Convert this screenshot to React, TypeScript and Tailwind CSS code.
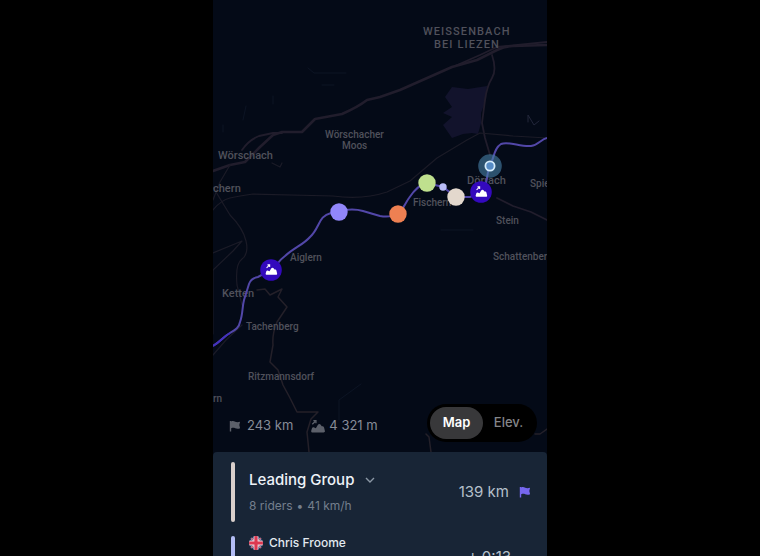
import { useState } from "react";

function FlagIcon({ className }: { className: string }) {
  return (
    <svg viewBox="0 0 12 12" className={className} fill="currentColor" aria-hidden="true">
      <path d="M.8 1h1.4v.5C3.8.8 5 1.2 6.2 1.7s2.6.7 4.900 0L10.300 5l.8 3.200c-2.200.8-3.600.5-4.900 0s-2.500-.7-4 0V11.500H.8z" />
    </svg>
  );
}

function ClimbShape() {
  return (
    <>
      <path d="M1.500 12.500C.6 12.500 0 11.900.2 11L.9 8.700c.3-1 1.300-1.200 2.100-.7l1.500.7L6.300 5.500c.6-1.100 2-1.200 2.700-.2l1 1.500c1.200-.3 2 .3 2.200 1.300l.7 3c.2.900-.3 1.400-1.200 1.400z" />
      <path d="M1.200 4.800 3.800 2.300M2.200 1.500h2.400v2.400" fill="none" stroke="currentColor" strokeWidth="1.2" />
    </>
  );
}

function ClimbIcon({ className }: { className: string }) {
  return (
    <svg viewBox="0 0 13 13" className={className} fill="currentColor" aria-hidden="true">
      <ClimbShape />
    </svg>
  );
}

function ClimbPin({ x, y }: { x: number; y: number }) {
  return (
    <g transform={`translate(${x} ${y})`} className="text-white">
      <circle r="10.8" fill="#3309bd" />
      <g transform="translate(-5.5 -6.5) scale(0.9)" fill="currentColor">
        <ClimbShape />
      </g>
    </g>
  );
}

const region = "text-[11px] font-medium tracking-widest";
const town = "text-[11px] font-medium";
const village = "text-[10px] font-medium";

const places = [
  { name: "WEISSENBACH", x: 210, y: 35, style: region },
  { name: "BEI LIEZEN", x: 221, y: 48, style: region },
  { name: "Wörschacher", x: 112, y: 138, style: village },
  { name: "Moos", x: 129, y: 149, style: village },
  { name: "Wörschach", x: 5, y: 159, style: town },
  { name: "chern", x: 0, y: 192, style: town },
  { name: "Aiglern", x: 77, y: 261, style: village },
  { name: "Ketten", x: 9, y: 297, style: town },
  { name: "Tachenberg", x: 33, y: 330, style: village },
  { name: "Ritzmannsdorf", x: 35, y: 380, style: village },
  { name: "rn", x: 0, y: 402, style: village },
  { name: "Dörrach", x: 254, y: 184, style: town },
  { name: "Fischern", x: 200, y: 206, style: village },
  { name: "Spie", x: 317, y: 187, style: village },
  { name: "Stein", x: 283, y: 224, style: village },
  { name: "Schattenber", x: 280, y: 260, style: village },
];

function RaceMap() {
  return (
    <svg
      viewBox="0 0 334 452"
      preserveAspectRatio="xMidYMax slice"
      className="block h-full w-full"
      role="img"
      aria-label="Race map"
    >
      <path
        d="M239 87 255 89 274 86 273 100 268 113 268 123 265 134 259 133 250 134 239 138 230 125 239 117 230 113 239 107 232 97z"
        fill="#12132c"
      />
      <g fill="none" stroke="#211d2c" strokeLinejoin="round" strokeLinecap="round">
        <g strokeWidth="2.6">
          <path d="M0 171 17 165 32 162 47 147 60 135 69 132H89L102 119 129 114Q145 107 154 100L167 97 187 90 239 67 264 60 284 50Q292 46 300 46L334 45" />
        </g>
        <g strokeWidth="1.8">
          <path d="M29 150Q36 140 46 136L60 133H69" />
          <path d="M242 66 267 55 284 47 334 42" />
          <path d="M279 55Q284 70 279 78T272 100L269 123 272 138 277 155M284 198 300 206 318 212 334 220" />
        </g>
        <g strokeWidth="1.2" stroke="#1b1b27">
          <path d="M0 210Q8 200 17 198T40 194L120 196Q150 200 174 192L197 181 224 158 254 140 267 133 300 136 334 138" />
          <path d="M0 187 17 215Q30 228 33 241T29 259 24 285L29 305M29 325 13 340 0 355" />
          <path d="M17 165 7 182 0 200" />
          <path d="M0 253 29 241 20 251 0 270" />
          <path d="M0 270V334" strokeWidth="1" />
          <path d="M59 163 67 167 69 163" />
        </g>
        <g strokeWidth="1.5" stroke="#242029">
          <path d="M44 290 52 289 57 295 69 289 65 297 74 307 64 322Q59 334 60 345L57 362 65 370 70 385 77 398 84 412H105L98 419 94 432 96 452" />
          <path d="M213 434 216 437 218 452M322 434 327 434 334 429" />
        </g>
        <g strokeWidth="1" stroke="#0c1424">
          <path d="M95 68 101 73 133 73M109 85H121M60 96V104M33 106 30 120M10 125V132M126 420V400L148 384M228 230H260" />
          <path d="M315 122V115L321 125 326 121" stroke="#22263a" />
        </g>
      </g>
      <g fill="#50515b" className="font-[Roboto,sans-serif]">
        {places.map((p) => (
          <text key={p.name} x={p.x} y={p.y} className={p.style}>
            {p.name}
          </text>
        ))}
      </g>
      <path
        d="M0 346C8 341 10 337 17 333 22 330 26 328 27 322 30 314 29 308 31 300L36 284Q38 278 45 277L58 270C66 264 64 262 72 256 82 247 90 245 97 237 107 228 105 216 118 213L126 211Q140 208 150 211T167 216Q178 218 185 213C191 209 191 205 196 198 202 189 208 184 214 183L230 187 243 197H257L268 193C275 188 273 173 277 166 281 158 281 148 288 144 296 141 307 147 318 146 326 145 328 139 334 138"
        fill="none"
        stroke="#5247a8"
        strokeWidth="2"
      />
      <path d="M0 346C8 341 10 337 17 333" fill="none" stroke="#4331bd" strokeWidth="2" />
      <ClimbPin x={58} y={270} />
      <ClimbPin x={268} y={192} />
      <circle cx="126" cy="212" r="8.7" fill="#9186fa" />
      <circle cx="185" cy="214" r="8.7" fill="#ee8052" />
      <circle cx="214" cy="183" r="8.7" fill="#bfe08e" />
      <circle cx="230" cy="187" r="3.7" fill="#b9bdf8" />
      <circle cx="243" cy="197" r="8.7" fill="#e3d8cd" />
      <circle cx="277" cy="166" r="11.8" fill="#4881a8" fillOpacity="0.6" />
      <circle cx="277" cy="166" r="4.6" fill="#568bc5" stroke="#d4ebfb" strokeWidth="1.8" />
    </svg>
  );
}

function BritishFlag() {
  return (
    <svg viewBox="0 0 14 14" className="size-3.5" role="img" aria-label="Great Britain">
      <clipPath id="gb">
        <circle cx="7" cy="7" r="7" />
      </clipPath>
      <g clipPath="url(#gb)">
        <path fill="#2b3a63" d="M0 0h14v14H0z" />
        <path d="M0 0 14 14M14 0 0 14" stroke="#b9aabf" strokeWidth="1.8" />
        <path d="M0 0 14 14M14 0 0 14" stroke="#d3465c" strokeWidth="0.8" />
        <path d="M7 0v14M0 7h14" stroke="#f0dfe6" strokeWidth="5" />
        <path d="M7 0v14M0 7h14" stroke="#dc3850" strokeWidth="3.2" />
      </g>
    </svg>
  );
}

export default function App() {
  const [view, setView] = useState("Map");

  return (
    <div className="flex h-screen justify-center overflow-hidden bg-black font-[Inter,sans-serif]">
      <main className="flex w-full max-w-[334px] flex-col bg-[#040a17]">
        <section className="relative min-h-0 flex-1">
          <RaceMap />
          <div className="absolute inset-x-0 bottom-0 flex items-center justify-between pr-2.5 pb-2.5 pl-4">
            <div className="flex gap-[18px] pt-1.5 text-[13px] text-[#878c97]">
              <span className="flex items-center gap-1.5">
                <FlagIcon className="size-3 text-[#5c606a]" />
                243 km
              </span>
              <span className="flex items-center gap-1">
                <ClimbIcon className="size-3.5 text-[#5c606a]" />4 321 m
              </span>
            </div>
            <div className="flex rounded-full bg-black p-[3px]">
              {["Map", "Elev."].map((name) => (
                <button
                  key={name}
                  type="button"
                  aria-pressed={view === name}
                  onClick={() => setView(name)}
                  className={
                    view === name
                      ? "h-8 w-[53px] rounded-full bg-[#38383a] text-[13px] font-semibold text-white"
                      : "h-8 w-[51px] rounded-full text-[13px] font-medium text-[#85868a]"
                  }
                >
                  {name}
                </button>
              ))}
            </div>
          </div>
        </section>

        <section className="h-[104px] shrink-0 overflow-hidden rounded-t bg-[#182536] pt-2.5 pr-4 pl-[18px]">
          <div className="flex h-[60px] items-center">
            <span className="h-full w-1 rounded-sm bg-[#d9cfcb]" />
            <div className="ml-3.5 flex-1">
              <button
                type="button"
                className="flex items-center gap-2.5 text-[15px] leading-7 font-medium text-[#eef3f8]"
              >
                Leading Group
                <svg viewBox="0 0 12 12" className="size-3 text-[#8b97a5]" aria-hidden="true">
                  <path d="m2 4 4 4 4-4" fill="none" stroke="currentColor" strokeWidth="1.4" />
                </svg>
              </button>
              <p className="flex gap-1 text-xs leading-6 text-[#747f8d]">
                <span>8 riders</span>
                <span>•</span>
                <span>41 km/h</span>
              </p>
            </div>
            <span className="text-[15px] text-[#b5c0cb]">139 km</span>
            <FlagIcon className="ml-2.5 size-3 text-[#7667ee]" />
          </div>
          <div className="mt-3.5 flex h-[42px]">
            <span className="h-full w-1 rounded-sm bg-[#b3bdf5]" />
            <div className="ml-3.5 flex h-3.5 flex-1 items-center gap-1.5 text-xs font-medium text-[#e2e9f0]">
              <BritishFlag />
              Chris Froome
            </div>
            <span className="mr-5 self-center text-[15px] text-[#b5c0cb]">+ 0:13</span>
          </div>
        </section>
      </main>
    </div>
  );
}
